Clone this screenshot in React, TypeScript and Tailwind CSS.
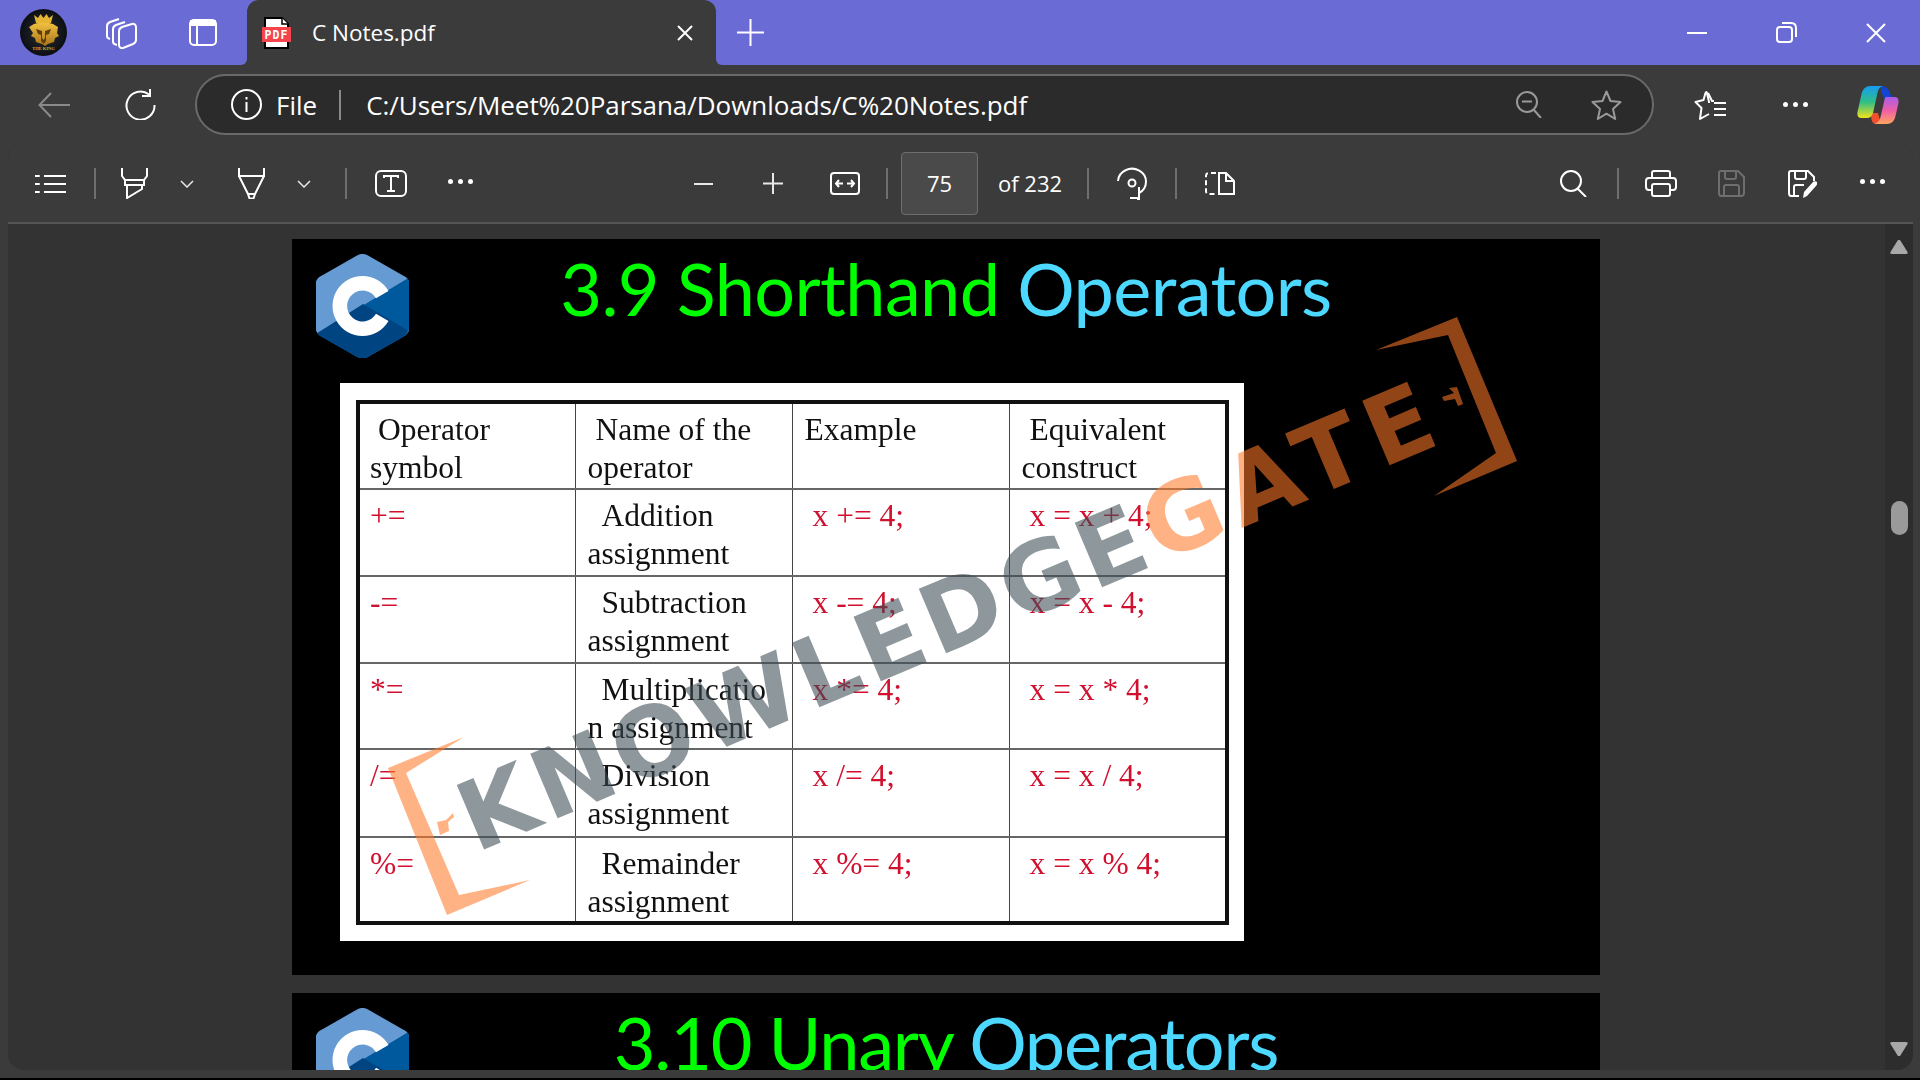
const UI_FONT = "font-['Open_Sans','Noto_Sans',sans-serif]";

const rows = [
  { sym: "+=", name: ["Addition", "assignment"], ex: "x += 4;", eq: "x = x + 4;" },
  { sym: "-=", name: ["Subtraction", "assignment"], ex: "x -= 4;", eq: "x = x - 4;" },
  { sym: "*=", name: ["Multiplicatio", "n assignment"], ex: "x *= 4;", eq: "x = x * 4;" },
  { sym: "/=", name: ["Division", "assignment"], ex: "x /= 4;", eq: "x = x / 4;" },
  { sym: "%=", name: ["Remainder", "assignment"], ex: "x %= 4;", eq: "x = x % 4;" },
];
const rowHeights = ["h-[87px]", "h-[87px]", "h-[86px]", "h-[88px]", "h-[86px]"];

function Separator({ className = "" }: { className?: string }) {
  return <div className={`h-[31px] w-[2px] bg-[#6e6e6e] ${className}`} />;
}

function Dots({ className = "" }: { className?: string }) {
  return (
    <div className={`flex w-[25px] justify-between ${className}`}>
      <span className="h-[5px] w-[5px] rounded-full bg-white" />
      <span className="h-[5px] w-[5px] rounded-full bg-white" />
      <span className="h-[5px] w-[5px] rounded-full bg-white" />
    </div>
  );
}

function Chevron({ className = "" }: { className?: string }) {
  return (
    <svg className={className} width="14" height="8" viewBox="0 0 14 8" fill="none" stroke="#e8e8e8" strokeWidth="1.5">
      <path d="M1 1l6 6 6-6" />
    </svg>
  );
}

function Avatar() {
  return (
    <svg className="ml-5" width="47" height="47" viewBox="0 0 47 47">
      <defs>
        <radialGradient id="avatarBg">
          <stop offset="0" stopColor="#2a3038" />
          <stop offset="1" stopColor="#0c0e12" />
        </radialGradient>
        <linearGradient id="avatarGold" x1="0" y1="0" x2="0" y2="1">
          <stop offset="0" stopColor="#f0c040" />
          <stop offset="1" stopColor="#a8741a" />
        </linearGradient>
      </defs>
      <circle cx="23.5" cy="23.5" r="23.5" fill="url(#avatarBg)" />
      <path d="M14 6l4 3 2.500-4 3 4 3-4 2.500 4 4-3-2 8H16z" fill="#e5b534" />
      <path d="M9 18l5-3 4-1h11l4 1 5 3-1 6 2 3-4 2-1 4-6 2-3 2-3-2-6-2-1-4-4-2 2-3z" fill="url(#avatarGold)" />
      <path d="M16 20l6 2v7l1.500 2 1.500-2v-7l6-2-2 5-3 1v6l-2.500 3-2.500-3v-6l-3-1z" fill="#5e400c" />
      <text x="23.5" y="41" textAnchor="middle" fontSize="4.5" fontWeight="700" fill="#d9a93a" fontFamily="Liberation Serif, serif">THE KING</text>
    </svg>
  );
}

function PdfIcon() {
  return (
    <svg width="29" height="32" viewBox="0 0 29 32">
      <path d="M3 1h17l6 6v24H3z" fill="#fff" stroke="#000" strokeWidth="2" />
      <path d="M20 1v6h6" fill="#fff" stroke="#000" strokeWidth="1.5" />
      <rect x="0" y="10" width="29" height="15" fill="#f4444c" />
      <text x="14.5" y="22" textAnchor="middle" fontSize="11.5" fontWeight="700" fill="#fff" letterSpacing="1" fontFamily="DejaVu Sans Mono, monospace">PDF</text>
    </svg>
  );
}

function Copilot() {
  return (
    <svg className="ml-[49px]" width="42" height="39" viewBox="0 0 42 39">
      <defs>
        <linearGradient id="copLeft" x1="0" y1="0" x2="0" y2="1">
          <stop offset="0" stopColor="#159cf2" />
          <stop offset="0.5" stopColor="#2fbf86" />
          <stop offset="1" stopColor="#f2e31a" />
        </linearGradient>
        <linearGradient id="copRight" x1="0" y1="0" x2="0" y2="1">
          <stop offset="0" stopColor="#a85ee8" />
          <stop offset="0.5" stopColor="#ef5fa6" />
          <stop offset="1" stopColor="#ffa45e" />
        </linearGradient>
      </defs>
      <path d="M24 1c4 0 7 2 9 7l2 5h-8l-3-7z" fill="#1146d4" />
      <path d="M14 28h7l3 11h-5c-4 0-5-4-5-11z" fill="#ef5030" />
      <path d="M13 1h13c-4 1-5 4-6 9l-4 18c-1 3-3 5-6 5H4c-3 0-4-3-3.500-6l4-18C5.500 4 9 1 13 1z" fill="url(#copLeft)" />
      <path d="M29 12h9c3 0 4 3 3.500 6l-3 13c-1 5-4 8-9 8H17c4-1 6-4 7-9l3-13c.5-3 1-5 2-5z" fill="url(#copRight)" />
    </svg>
  );
}

function CLogo() {
  return (
    <svg className="ml-6 mt-[15px]" width="93" height="104" viewBox="0 0 93 104">
      <path d="M41 1.500a11 11 0 0 1 11 0l35 20a11 11 0 0 1 6 6v49a11 11 0 0 1-6 6l-35 20a11 11 0 0 1-11 0L6 82.500a11 11 0 0 1-6-6v-49a11 11 0 0 1 6-6z" fill="#659ad2" />
      <path d="M91.500 24.500c1 1.500 1.500 3 1.500 4v47a11 11 0 0 1-6 7.500l-35 20a11 11 0 0 1-11 0L6 83c-2-1-3-2-4.500-4z" fill="#00599c" />
      <path d="M91.500 76c-1 3-2.500 5.500-4.500 7l-35 19.500a11 11 0 0 1-11 0L6 83c-2-1-3-2-4.500-4L47 50z" fill="#004482" />
      <path d="M46.500 22a30 30 0 1 0 26 45l-12.500-7.200a15.500 15.500 0 1 1 0-15.600L72.500 37a30 30 0 0 0-26-15z" fill="#fff" />
    </svg>
  );
}

function Watermark() {
  return (
    <svg className="pointer-events-none absolute left-0 top-0" width="1308" height="736" viewBox="292 239 1308 736">
      <g fill="#ff7a28" fillOpacity="0.57">
        <path d="M464 737L388 768L447 915L530 880L459 895L406 773z" />
        <path d="M437 822l9-2 7-7 1 4-6 5 1 9-9 4z" />
        <path d="M1376 350L1457 317L1517 461L1434 496L1496 453L1448 335z" />
        <path d="M1442 397l12-4-5-5 8-1 6 17-5 2-3-7-11 2z" />
      </g>
      <text
        x="476"
        y="853"
        transform="rotate(-23 476 853)"
        fontFamily="DejaVu Sans, sans-serif"
        fontWeight="700"
        fontSize="96"
        letterSpacing="5.5"
      >
        <tspan fill="#3c4e55" fillOpacity="0.58">KNOWLEDGE</tspan>
        <tspan fill="#ff7a28" fillOpacity="0.57" letterSpacing="10">GATE</tspan>
      </text>
    </svg>
  );
}

function SlideTitle({ green, blue, tracking }: { green: string; blue: string; tracking: string }) {
  return (
    <div className="grid h-[144px] shrink-0 grid-cols-[1fr_auto_1fr]">
      <CLogo />
      <h1 className={`pt-[5px] font-['Lato',sans-serif] text-[72px] leading-[88px] whitespace-nowrap ${tracking}`}>
        <span className="text-[#00ff00]">{green} </span>
        <span className="text-[#4dd8ff]">{blue}</span>
      </h1>
      <div />
    </div>
  );
}

function NotesTable() {
  const cell = "border-x border-y-2 border-x-[#444] border-y-[#666] pr-3 pt-[7px] align-top";
  return (
    <table className="w-[869px] table-fixed border-collapse border-[4px] border-[#111] font-['Liberation_Serif',serif] text-[31.5px] leading-[38px] text-[#111] whitespace-nowrap">
      <colgroup>
        <col className="w-[217px]" />
        <col className="w-[217px]" />
        <col className="w-[217px]" />
        <col className="w-[218px]" />
      </colgroup>
      <tbody>
        <tr className="h-[87px]">
          <td className={`${cell} pl-[10px]`}>
            <div className="pl-2">Operator</div>
            <div>symbol</div>
          </td>
          <td className={`${cell} pl-3`}>
            <div className="pl-2">Name of the</div>
            <div>operator</div>
          </td>
          <td className={`${cell} pl-3`}>Example</td>
          <td className={`${cell} pl-3`}>
            <div className="pl-2">Equivalent</div>
            <div>construct</div>
          </td>
        </tr>
        {rows.map((row, i) => (
          <tr key={row.sym} className={rowHeights[i]}>
            <td className={`${cell} pl-[10px] text-[#d0102e]`}>{row.sym}</td>
            <td className={`${cell} pl-3`}>
              <div className="pl-[14px]">{row.name[0]}</div>
              <div>{row.name[1]}</div>
            </td>
            <td className={`${cell} pl-5 text-[#d0102e]`}>{row.ex}</td>
            <td className={`${cell} pl-5 text-[#d0102e]`}>{row.eq}</td>
          </tr>
        ))}
      </tbody>
    </table>
  );
}

export default function App() {
  return (
    <div className={`flex h-[1080px] w-[1920px] flex-col overflow-hidden bg-[#3b3b3b] text-white ${UI_FONT}`}>
      {/* title bar */}
      <div className="flex h-[65px] shrink-0 items-center bg-[#6b6bd6]">
        <Avatar />
        <svg className="ml-[38px]" width="32" height="32" viewBox="0 0 32 32" fill="none" stroke="#fff" strokeWidth="2" strokeLinejoin="round">
          <path d="M5 22c-2-.5-3-1-3-3V9c0-2 1-3 3-4l9-3" />
          <path d="M12 28c-2-.5-4-1-4-3V12c0-2 1-3 3-4l9-3" />
          <path d="M14 14c0-2 1-3 3-4l10-3c2-.5 4 .5 4 3v13c0 2-1 3-3 4l-10 4c-2 .5-4-.5-4-3z" />
        </svg>
        <svg className="ml-[52px]" width="28" height="27" viewBox="0 0 28 27" fill="none" stroke="#fff" strokeWidth="2">
          <rect x="1" y="1" width="26" height="25" rx="4" />
          <path d="M1 6h26M8 6v20" />
          <path d="M2 2h24v4H2z" fill="#fff" />
        </svg>
        <div className="relative ml-[30px] flex h-full w-[469px] items-center rounded-t-[12px] bg-[#3b3b3b]">
          <div className="absolute -left-[6px] bottom-0 h-[6px] w-[6px] bg-[#3b3b3b]">
            <div className="h-full w-full rounded-br-[6px] bg-[#6b6bd6]" />
          </div>
          <div className="absolute -right-[6px] bottom-0 h-[6px] w-[6px] bg-[#3b3b3b]">
            <div className="h-full w-full rounded-bl-[6px] bg-[#6b6bd6]" />
          </div>
          <div className="ml-[15px]">
            <PdfIcon />
          </div>
          <span className="ml-[21px] mt-[1px] text-[22.5px] leading-none">C Notes.pdf</span>
          <svg className="ml-auto mr-[23px]" width="16" height="16" viewBox="0 0 16 16" stroke="#fff" strokeWidth="2">
            <path d="M1 1l14 14M15 1L1 15" />
          </svg>
        </div>
        <svg className="ml-[21px]" width="27" height="27" viewBox="0 0 27 27" stroke="#fff" strokeWidth="2">
          <path d="M13.5 0v27M0 13.5h27" />
        </svg>
        <svg className="ml-auto" width="20" height="2" viewBox="0 0 20 2" stroke="#fff" strokeWidth="2">
          <path d="M0 1h20" />
        </svg>
        <svg className="ml-[69px]" width="21" height="21" viewBox="0 0 21 21" fill="none" stroke="#fff" strokeWidth="2">
          <rect x="1" y="5" width="15" height="15" rx="3" />
          <path d="M6 1h9c3 0 5 2 5 5v9" />
        </svg>
        <svg className="ml-[69px] mr-[34px]" width="20" height="20" viewBox="0 0 20 20" stroke="#fff" strokeWidth="2">
          <path d="M1 1l18 18M19 1L1 19" />
        </svg>
      </div>

      {/* address row */}
      <div className="flex h-[78px] shrink-0 items-center pt-[1px]">
        <svg className="ml-[38px]" width="32" height="26" viewBox="0 0 32 26" fill="none" stroke="#8a8a8a" strokeWidth="2">
          <path d="M32 13H2M13 1L1.500 13 13 25" />
        </svg>
        <svg className="ml-[55px]" width="31" height="31" viewBox="0 0 31 31" fill="none" stroke="#fff" strokeWidth="2">
          <path d="M24 5.500A14 14 0 1 0 29.500 16" />
          <path d="M25 0v7h-8" />
        </svg>
        <div className="ml-[39px] flex h-[61px] w-[1459px] items-center rounded-full border-2 border-[#6a6a6a] bg-[#2b2b2b]">
          <svg className="ml-[34px]" width="31" height="31" viewBox="0 0 31 31" fill="none" stroke="#fff" strokeWidth="2">
            <circle cx="15.5" cy="15.5" r="14.5" />
            <path d="M15.5 13v10M15.5 8v2.500" />
          </svg>
          <span className="ml-[14px] text-[26px] leading-none">File</span>
          <div className="ml-[22px] h-[30px] w-[2px] bg-[#8a8a8a]" />
          <span className="ml-[25px] text-[26px] leading-none tracking-[-0.05px]">C:/Users/Meet%20Parsana/Downloads/C%20Notes.pdf</span>
          <svg className="ml-auto" width="26" height="27" viewBox="0 0 26 27" fill="none" stroke="#9a9a9a" strokeWidth="2">
            <ellipse cx="11" cy="11" rx="10" ry="10" />
            <path d="M6 10.500h10M17.500 18.500L25 27" />
          </svg>
          <svg className="ml-[49px] mr-[30px]" width="31" height="30" viewBox="0 0 31 30" fill="none" stroke="#9a9a9a" strokeWidth="2" strokeLinejoin="round">
            <path d="M15.500 1.500l4 9.500 10 1-7.500 7 2.200 10-8.700-5.300L6.800 29 9 19l-7.500-7 10-1z" />
          </svg>
        </div>
        <svg className="ml-[40px]" width="32" height="30" viewBox="0 0 32 30" fill="none" stroke="#fff" strokeWidth="2" strokeLinejoin="round">
          <path d="M15 13V12l-2-9c-.3-1.500-1-1.500-1.500 0L9.500 10 1.500 12l6 6L6 29l9-5" />
          <path d="M14 3l4 8h2M20 13h12M20 19h12M20 25h12" />
        </svg>
        <Dots className="ml-[57px]" />
        <Copilot />
      </div>

      {/* pdf viewer card */}
      <div className="ml-2 mr-[7px] flex min-h-0 flex-1 flex-col overflow-hidden rounded-[16px] bg-[#333]">
        <div className="flex h-[81px] shrink-0 items-center border-b-2 border-[#555] bg-[#3b3b3b] pt-[2px]">
          <svg className="ml-[27px]" width="31" height="20" viewBox="0 0 31 20" stroke="#fff" strokeWidth="2">
            <path d="M9 2h22M9 10h22M9 18h22" />
            <path d="M0 2h4M0 10h4M0 18h4" strokeLinecap="round" />
          </svg>
          <Separator className="ml-[28px]" />
          <svg className="ml-[25px]" width="27" height="31" viewBox="0 0 27 31" fill="none" stroke="#fff" strokeWidth="2">
            <path d="M1 0v8l3 4h19l3-4V0" />
            <path d="M4 12v5h19v-5M6 17v13l15-9v-4" />
          </svg>
          <Chevron className="ml-[32px]" />
          <svg className="ml-[43px]" width="29" height="31" viewBox="0 0 29 31" fill="none" stroke="#fff" strokeWidth="2">
            <path d="M2 0v8h25V0" />
            <path d="M2 8l9 18h7l9-18M11 26l1.500 4.500h4L18 26" />
          </svg>
          <Chevron className="ml-[31px]" />
          <Separator className="ml-[34px]" />
          <svg className="ml-[28px]" width="32" height="27" viewBox="0 0 32 27" fill="none" stroke="#fff" strokeWidth="2">
            <rect x="1" y="1" width="30" height="25" rx="5" />
            <path d="M9 8V6h14v2M16 6v15M12 21h8" />
          </svg>
          <Dots className="mb-1 ml-[41px]" />
          <svg className="ml-[221px]" width="19" height="2" viewBox="0 0 19 2" stroke="#e8e8e8" strokeWidth="2">
            <path d="M0 1h19" />
          </svg>
          <svg className="ml-[50px]" width="20" height="21" viewBox="0 0 20 21" stroke="#e8e8e8" strokeWidth="2">
            <path d="M10 0v21M0 10.500h20" />
          </svg>
          <svg className="ml-[47px]" width="30" height="23" viewBox="0 0 30 23" fill="none" stroke="#fff" strokeWidth="2">
            <rect x="1" y="1" width="28" height="21" rx="3" />
            <path d="M6 11.500h7M9 8l-3 3.500L9 15M24 11.500h-7M21 8l3 3.500L21 15" />
          </svg>
          <Separator className="ml-[26px]" />
          <div className="ml-[13px] flex h-[63px] w-[77px] items-center justify-center rounded-[4px] border border-[#6e6e6e] bg-[#4a4a4a] text-[22px]">
            75
          </div>
          <span className="ml-[20px] w-[66px] whitespace-nowrap text-[22px]">of 232</span>
          <Separator className="ml-[23px]" />
          <svg className="ml-[28px]" width="30" height="33" viewBox="0 0 30 33" fill="none" stroke="#fff" strokeWidth="2">
            <path d="M1 14A14 13 0 1 1 22 26" />
            <circle cx="15" cy="16" r="3.500" />
            <path d="M22 20v12h-2M13 31h9" />
          </svg>
          <Separator className="ml-[28px]" />
          <svg className="ml-[28px]" width="30" height="23" viewBox="0 0 30 23" fill="none" stroke="#fff" strokeWidth="2">
            <path d="M11 1H4C2 1 1 2 1 4v15c0 2 1 3 3 3h7" strokeDasharray="5 3" />
            <path d="M14 22V1h7l8 8v13z" />
            <path d="M21 1v8h8" />
          </svg>
          <svg className="ml-[325px]" width="27" height="27" viewBox="0 0 27 27" fill="none" stroke="#fff" strokeWidth="2">
            <ellipse cx="11" cy="11" rx="10" ry="10" />
            <path d="M17.500 18.500L26 27" />
          </svg>
          <Separator className="ml-[30px]" />
          <svg className="ml-[26px]" width="32" height="27" viewBox="0 0 32 27" fill="none" stroke="#fff" strokeWidth="2">
            <path d="M7 8V3c0-1 1-2 2-2h14c1 0 2 1 2 2v5" />
            <path d="M7 20H4c-2 0-3-1-3-3v-6c0-2 1-3 3-3h24c2 0 3 1 3 3v6c0 2-1 3-3 3h-3" />
            <rect x="7" y="14" width="18" height="12" rx="2" />
          </svg>
          <svg className="ml-[41px]" width="27" height="27" viewBox="0 0 27 27" fill="none" stroke="#6e6e6e" strokeWidth="2">
            <path d="M3 1h17l6 6v16c0 2-1 3-3 3H3c-1 0-2-1-2-3V3c0-1 1-2 2-2z" />
            <path d="M7 1v6c0 1 1 2 2 2h7c1 0 2-1 2-2V1M6 26V17c0-1 1-2 2-2h11c1 0 2 1 2 2v9" />
          </svg>
          <svg className="ml-[43px]" width="29" height="28" viewBox="0 0 29 28" fill="none" stroke="#fff" strokeWidth="2">
            <path d="M11 26H3c-1 0-2-1-2-3V3c0-1 1-2 2-2h17l6 6v4" />
            <path d="M7 1v6c0 1 1 2 2 2h7c1 0 2-1 2-2V1M6 26V17c0-1 1-2 2-2h8" />
            <path d="M15 28l1-6 9-10c1-1 3-1 4 0s0 3-1 4l-9 10z" fill="#fff" stroke="none" />
          </svg>
          <Dots className="mb-1 ml-[43px]" />
        </div>
        <div className="flex min-h-0 flex-1">
          <div className="min-w-0 flex-1 overflow-hidden pl-[284px] pt-[15px]">
            <div className="relative flex h-[736px] w-[1308px] flex-col bg-black">
              <SlideTitle green="3.9 Shorthand" blue="Operators" tracking="tracking-[-0.6px]" />
              <div className="ml-12 h-[558px] w-[904px] bg-white pl-[16px] pt-[17px] blur-[0.4px]">
                <NotesTable />
              </div>
              <Watermark />
            </div>
            <div className="mt-[18px] h-[300px] w-[1308px] bg-black">
              <SlideTitle green="3.10 Unary" blue="Operators" tracking="tracking-[-1.2px]" />
            </div>
          </div>
          <div className="relative flex w-[28px] shrink-0 flex-col items-center justify-between bg-[#2d2d2d] pb-[14px] pt-[16px]">
            <svg width="18" height="14" viewBox="0 0 18 14" fill="#a8a8a8">
              <path d="M9 0c1 0 1.500.5 2 1.500L17.500 12c.5 1 0 2-1 2h-15c-1 0-1.500-1-1-2L7 1.500C7.500.5 8 0 9 0z" />
            </svg>
            <div className="absolute left-[6px] top-[277px] h-[34px] w-[17px] rounded-full bg-[#9a9a9a]" />
            <svg width="18" height="14" viewBox="0 0 18 14" fill="#a8a8a8">
              <path d="M9 14c1 0 1.500-.5 2-1.500L17.500 2c.5-1 0-2-1-2h-15c-1 0-1.500 1-1 2L7 12.500C7.500 13.500 8 14 9 14z" />
            </svg>
          </div>
        </div>
      </div>
      <div className="h-[8px] shrink-0" />
      <div className="h-[2px] shrink-0 bg-black" />
    </div>
  );
}
